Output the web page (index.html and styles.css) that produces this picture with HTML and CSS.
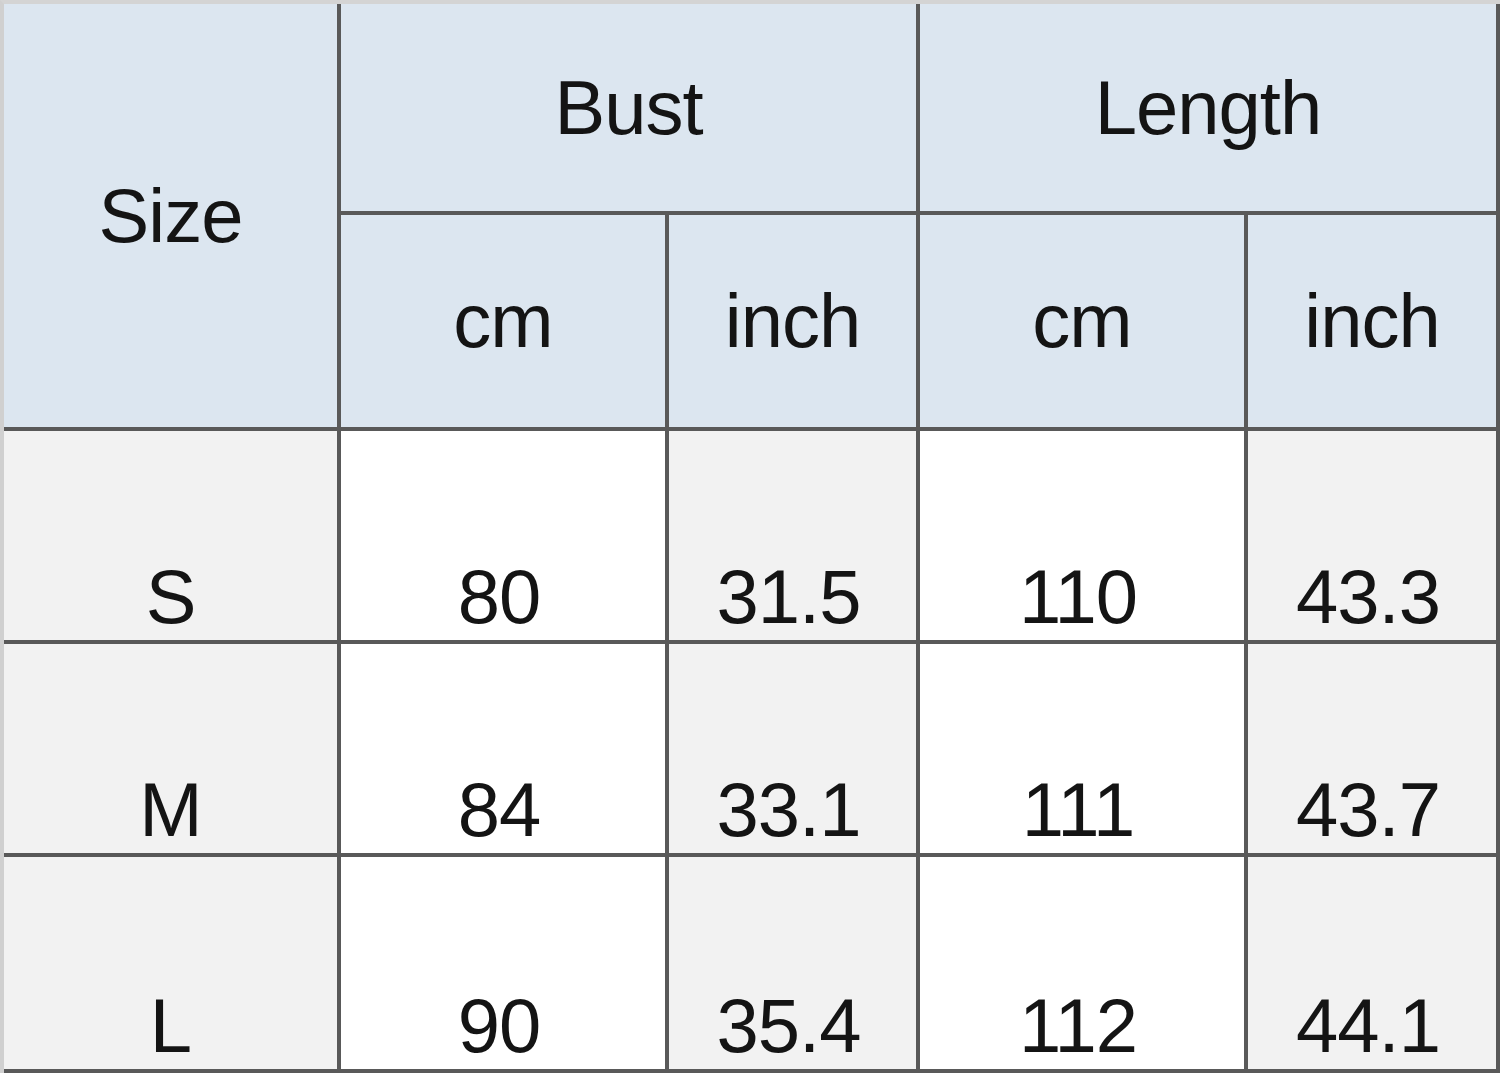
FILE: index.html
```html
<!DOCTYPE html>
<html lang="en">
<head>
<meta charset="utf-8">
<title>Size chart</title>
<link rel="stylesheet" href="styles.css">
</head>
<body>
<div class="chart">
  <div class="cell head size-head">Size</div>
  <div class="cell head group">Bust</div>
  <div class="cell head group">Length</div>
  <div class="cell head r2">cm</div>
  <div class="cell head r2">inch</div>
  <div class="cell head r2">cm</div>
  <div class="cell head r2 last">inch</div>

  <div class="cell size">S</div>
  <div class="cell white">80</div>
  <div class="cell grey">31.5</div>
  <div class="cell white">110</div>
  <div class="cell grey last">43.3</div>

  <div class="cell size">M</div>
  <div class="cell white">84</div>
  <div class="cell grey">33.1</div>
  <div class="cell white">111</div>
  <div class="cell grey last">43.7</div>

  <div class="cell size">L</div>
  <div class="cell white">90</div>
  <div class="cell grey">35.4</div>
  <div class="cell white">112</div>
  <div class="cell grey last">44.1</div>
</div>
</body>
</html>
```
FILE: styles.css
```css
html, body {
  margin: 0;
  padding: 0;
  background: #ffffff;
}

.chart {
  display: grid;
  grid-template-columns: 337px 328px 251px 328px 252px;
  grid-template-rows: 211px 216px 213px 213px 216px;
  width: 1500px;
  height: 1073px;
  box-sizing: border-box;
  border-top: 4px solid #d4d4d4;
  border-left: 4px solid #d0d0d0;
  font-family: "Liberation Sans", Arial, sans-serif;
  font-size: 76px;
  line-height: 1;
  letter-spacing: -1px;
  color: #141414;
}

.cell {
  display: flex;
  justify-content: center;
  box-sizing: border-box;
  border-right: 4px solid #595959;
  border-bottom: 4px solid #595959;
}

.head {
  background: #dce6f0;
  align-items: center;
}

.size-head {
  grid-row: span 2;
}

.group {
  grid-column: span 2;
}

.size,
.white,
.grey {
  align-items: flex-end;
  padding-bottom: 5px;
}

.white,
.grey {
  padding-right: 8px;
}

.size {
  background: #f2f2f2;
}

.white {
  background: #ffffff;
}

.grey {
  background: #f2f2f2;
}
```
